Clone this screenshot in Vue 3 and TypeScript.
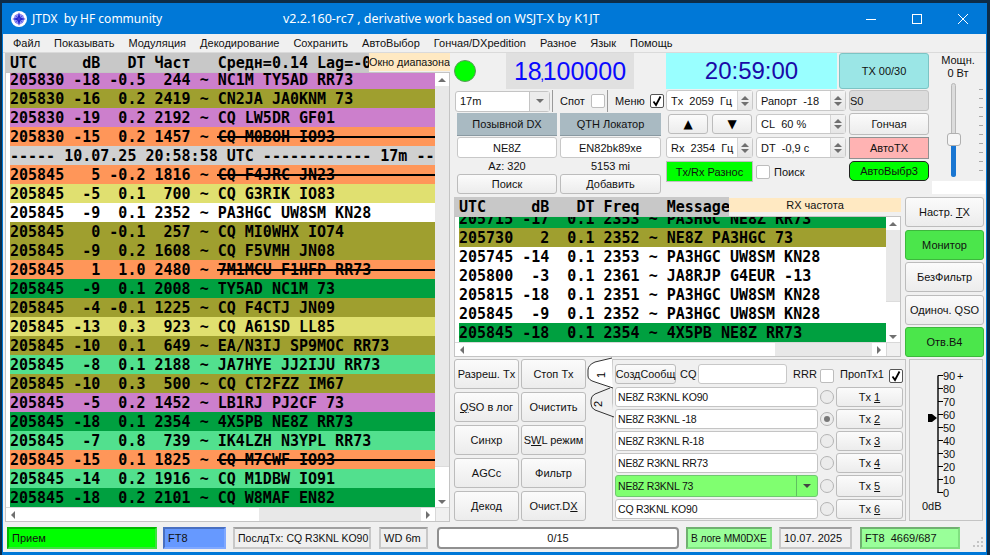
<template>
  <div class="desktop">
    <div class="window">
      <header class="titlebar">
        <svg class="app-icon" width="16" height="16" viewBox="0 0 16 16">
          <circle cx="8" cy="8" r="8" fill="#fff" />
          <circle cx="8" cy="8" r="5.4" fill="#8f8ff5" />
          <path d="M8 1 9.3 6.7 15 8 9.3 9.3 8 15 6.7 9.3 1 8 6.7 6.7Z" fill="#2222cc" />
          <path d="M4 4 8 7 12 4 9 8 12 12 8 9 4 12 7 8Z" fill="#3a3ad8" />
        </svg>
        <span class="app-name">JTDX&nbsp; by HF community</span>
        <span class="app-version">v2.2.160-rc7 , derivative work based on WSJT-X by K1JT</span>
        <div class="win-controls">
          <button class="win-btn">
            <svg width="10" height="10" viewBox="0 0 10 10"><path d="M0 5.5H10" stroke="#fff" /></svg>
          </button>
          <button class="win-btn">
            <svg width="10" height="10" viewBox="0 0 10 10"><rect x=".5" y=".5" width="9" height="9" fill="none" stroke="#fff" /></svg>
          </button>
          <button class="win-btn">
            <svg width="10" height="10" viewBox="0 0 10 10"><path d="M0 0 10 10M10 0 0 10" stroke="#fff" /></svg>
          </button>
        </div>
      </header>

      <nav class="menubar">
        <span v-for="item in menu" :key="item">{{ item }}</span>
      </nav>

      <main class="content">
        <!-- band activity -->
        <section class="band">
          <div class="list-head">
            <span class="head-mono band-mono">{{ bandHead }}</span>
            <span class="head-note band-note">Окно диапазона</span>
          </div>
          <div class="list-frame band-frame">
            <div class="list-body band-body">
              <div class="rows band-rows">
                <div v-for="(r, i) in bandRows" :key="i" class="row" :class="r.c">{{ r.t }}</div>
              </div>
              <div class="vscroll">
                <div class="sb-btn"><i class="arr up"></i></div>
                <div class="sb-fill"></div>
                <div class="sb-thumb band-thumb"><i class="arr down"></i></div>
              </div>
            </div>
            <div class="hscroll">
              <div class="sb-btn side"><i class="arr left"></i></div>
              <div class="h-thumb band-hthumb"></div>
              <div class="sb-fill"></div>
              <div class="sb-btn side"><i class="arr right"></i></div>
              <div class="corner"></div>
            </div>
          </div>
        </section>

        <section class="right">
          <!-- upper controls -->
          <div class="top">
            <div class="top-main">
              <div class="display-row">
                <div class="led"></div>
                <div class="freq">18<small>,</small>100000</div>
                <div class="clock">20:59:00</div>
                <div class="tx-count">TX 00/30</div>
              </div>
              <div class="control-cols">
                <div class="dx-col">
                  <div class="band-row">
                    <div class="combo">
                      <span class="combo-text">17m</span>
                      <span class="combo-arrow"><i class="arr down"></i></span>
                    </div>
                    <span class="sep sep-a"></span>
                    <span class="lbl spot">Спот</span>
                    <span class="check check-spot"></span>
                    <span class="sep sep-b"></span>
                    <span class="lbl menu-lbl">Меню</span>
                    <span class="check check-menu">
                      <svg width="12" height="12" viewBox="0 0 12 12"><path d="M2.5 6.5 5 10 9.5 1.5" fill="none" stroke="#000" stroke-width="1.8" /></svg>
                    </span>
                  </div>
                  <div class="dx-grid">
                    <div class="dx-label">Позывной DX</div>
                    <div class="dx-label">QTH Локатор</div>
                    <div class="field">NE8Z</div>
                    <div class="field">EN82bk89xe</div>
                    <div class="dx-info">Az: 320</div>
                    <div class="dx-info">5153 mi</div>
                    <button class="btn">Поиск</button>
                    <button class="btn">Добавить</button>
                  </div>
                </div>

                <div class="spin-grid">
                  <div class="spin"><span>Tx&nbsp; 2059&nbsp; Гц</span><span class="spin-arrows"><i class="arr up"></i><i class="arr down"></i></span></div>
                  <div class="spin"><span>Рапорт&nbsp; -18</span><span class="spin-arrows"><i class="arr up"></i><i class="arr down"></i></span></div>
                  <div class="updown">
                    <button class="btn glyph">▲</button>
                    <button class="btn glyph">▼</button>
                  </div>
                  <div class="spin"><span>CL&nbsp; 60 %</span><span class="spin-arrows"><i class="arr up"></i><i class="arr down"></i></span></div>
                  <div class="spin"><span>Rx&nbsp; 2354&nbsp; Гц</span><span class="spin-arrows"><i class="arr up"></i><i class="arr down"></i></span></div>
                  <div class="spin"><span>DT&nbsp; -0,9 с</span><span class="spin-arrows"><i class="arr up"></i><i class="arr down"></i></span></div>
                  <div class="split">Tx/Rx Разнос</div>
                  <div class="search-check"><span class="check"></span><span class="lbl">Поиск</span></div>
                </div>

                <div class="auto-col">
                  <div class="s-meter">S0</div>
                  <button class="btn">Гончая</button>
                  <div class="auto-tx">АвтоTX</div>
                  <div class="auto-sel">АвтоВыбр3</div>
                </div>
              </div>
            </div>

            <div class="power">
              <div class="power-label">Мощн.<br />0 Вт</div>
              <div class="slider">
                <div class="slider-track"></div>
                <div class="slider-fill"></div>
                <div class="slider-handle"></div>
                <div class="slider-ticks"><i v-for="n in 10" :key="n"></i></div>
              </div>
              <div class="power-blank"></div>
            </div>
          </div>

          <!-- rx frequency window -->
          <div class="rx">
            <div class="rx-list">
              <div class="list-head rx-head">
                <span class="head-mono rx-mono">{{ rxHead }}</span>
                <span class="head-note rx-note">RX частота</span>
              </div>
              <div class="list-frame rx-frame">
                <div class="list-body rx-body">
                  <div class="rows rx-rows">
                    <div v-for="(r, i) in rxRows" :key="i" class="row" :class="r.c">{{ r.t }}</div>
                  </div>
                  <div class="vscroll">
                    <div class="sb-btn"><i class="arr up"></i></div>
                    <div class="sb-fill"></div>
                    <div class="sb-thumb rx-thumb"><i class="arr down"></i></div>
                  </div>
                </div>
                <div class="hscroll">
                  <div class="sb-btn side"><i class="arr left"></i></div>
                  <div class="h-thumb rx-hthumb"></div>
                  <div class="sb-fill"></div>
                  <div class="sb-btn side"><i class="arr right"></i></div>
                  <div class="corner"></div>
                </div>
              </div>
            </div>
            <div class="rx-side">
              <button class="btn"><span>Настр. <u>T</u>X</span></button>
              <button class="btn on">Монитор</button>
              <button class="btn">БезФильтр</button>
              <button class="btn">Одиноч. QSO</button>
              <button class="btn on">Отв.B4</button>
            </div>
          </div>

          <!-- lower controls -->
          <div class="bottom">
            <div class="actions">
              <button class="btn">Разреш. Tx</button>
              <button class="btn">Стоп Tx</button>
              <button class="btn"><span><u>Q</u>SO в лог</span></button>
              <button class="btn">Очистить</button>
              <button class="btn">Синхр</button>
              <button class="btn"><span>S<u>W</u>L режим</span></button>
              <button class="btn">AGCc</button>
              <button class="btn">Фильтр</button>
              <button class="btn">Декод</button>
              <button class="btn"><span>Очист.D<u>X</u></span></button>
            </div>

            <div class="tabs">
              <svg class="tab-strip" width="30" height="62" viewBox="0 0 30 62">
                <path d="M23 30 8 36Q4 38 4 42V46Q4 50 8 52L27 59" fill="#f0f0f0" stroke="#333" />
                <path d="M25 0 8 4Q1 7 1 12V18Q1 22 8 24L26 30" fill="#fff" stroke="#333" />
                <text transform="translate(18 17) rotate(-90)" class="tab-num" text-anchor="middle">1</text>
                <text transform="translate(15 46) rotate(-90)" class="tab-num" text-anchor="middle">2</text>
              </svg>
              <div class="tab-panel">
                <div class="msg-top">
                  <button class="btn gen">СоздСообщ</button>
                  <span class="lbl cq">CQ</span>
                  <span class="field cq-input"></span>
                  <span class="lbl rrr">RRR</span>
                  <span class="check check-rrr"></span>
                  <span class="lbl prop">ПропТх1</span>
                  <span class="check check-prop">
                    <svg width="12" height="12" viewBox="0 0 12 12"><path d="M2.5 6.5 5 10 9.5 1.5" fill="none" stroke="#000" stroke-width="1.8" /></svg>
                  </span>
                </div>
                <template v-for="(m, i) in messages" :key="i">
                  <div class="msg" :class="{ 'msg-on': m.active }">
                    <span class="msg-text">{{ m.text }}</span>
                    <span v-if="m.active" class="msg-arrow"><i class="arr down dark"></i></span>
                  </div>
                  <span class="radio" :class="{ sel: m.sel }"></span>
                  <button class="btn">
                    <span>Tx <u>{{ i + 1 }}</u></span>
                  </button>
                </template>
              </div>
            </div>

            <div class="meter">
              <svg width="72" height="160" viewBox="0 0 72 160">
                <path d="M28 15.5V133" stroke="#000" stroke-width="1.4" fill="none" />
                <template v-for="(v, i) in scale" :key="v">
                  <path :d="`M28 ${15.5 + i * 13}H33`" stroke="#000" />
                  <text x="33" :y="19.5 + i * 13" class="scale-text">{{ v }}</text>
                </template>
                <text x="47" y="20" class="scale-text">+</text>
                <path d="M18 54H22L27 58 22 62H18Z" fill="#000" />
                <text x="12" y="150" class="scale-text">0dB</text>
              </svg>
            </div>
          </div>
        </section>
      </main>

      <footer class="status">
        <div class="st st-rx">Прием</div>
        <div class="st st-mode">FT8</div>
        <div class="st st-last">ПослдTx: CQ R3KNL KO90</div>
        <div class="st st-wd">WD 6m</div>
        <div class="st-progress">0/15</div>
        <div class="st st-log">В логе MM0DXE</div>
        <div class="st st-date">10.07. 2025</div>
        <div class="st st-count">FT8&nbsp; 4669/687</div>
        <svg class="grip" width="12" height="12" viewBox="0 0 12 12" fill="#c4c4c4">
          <rect x="9" y="1" width="2" height="2" /><rect x="5" y="5" width="2" height="2" /><rect x="9" y="5" width="2" height="2" />
          <rect x="1" y="9" width="2" height="2" /><rect x="5" y="9" width="2" height="2" /><rect x="9" y="9" width="2" height="2" />
        </svg>
      </footer>
    </div>
  </div>
</template>

<script setup lang="ts">
interface Row {
  t: string
  c: string
}

interface TxMessage {
  text: string
  sel?: boolean
  active?: boolean
}

const menu = ['Файл', 'Показывать', 'Модуляция', 'Декодирование', 'Сохранить', 'АвтоВыбор', 'Гончая/DXpedition', 'Разное', 'Язык', 'Помощь']

const bandHead = 'UTC     dB   DT Част   Средн=0.14 Lag=-0'
const rxHead = 'UTC     dB   DT Freq   Message'

const bandRows: Row[] = [
  { t: '205830 -18 -0.5  244 ~ NC1M TY5AD RR73', c: 'violet' },
  { t: '205830 -16  0.2 2419 ~ CN2JA JA0KNM 73', c: 'olive' },
  { t: '205830 -19  0.2 2192 ~ CQ LW5DR GF01', c: 'violet' },
  { t: '205830 -15  0.2 1457 ~ CQ M0BOH IO93', c: 'orange strike' },
  { t: '----- 10.07.25 20:58:58 UTC ------------ 17m -- ', c: 'sep-row' },
  { t: '205845   5 -0.2 1816 ~ CQ F4JRC JN23', c: 'orange strike' },
  { t: '205845  -5  0.1  700 ~ CQ G3RIK IO83', c: 'yellow' },
  { t: '205845  -9  0.1 2352 ~ PA3HGC UW8SM KN28', c: 'white' },
  { t: '205845   0 -0.1  257 ~ CQ MI0WHX IO74', c: 'olive' },
  { t: '205845  -9  0.2 1608 ~ CQ F5VMH JN08', c: 'olive' },
  { t: '205845   1  1.0 2480 ~ 7M1MCU F1HFP RR73', c: 'orange strike' },
  { t: '205845  -9  0.1 2008 ~ TY5AD NC1M 73', c: 'green' },
  { t: '205845  -4 -0.1 1225 ~ CQ F4CTJ JN09', c: 'olive' },
  { t: '205845 -13  0.3  923 ~ CQ A61SD LL85', c: 'yellow' },
  { t: '205845 -10  0.1  649 ~ EA/N3IJ SP9MOC RR73', c: 'olive' },
  { t: '205845  -8  0.1 2188 ~ JA7HYE JJ2IJU RR73', c: 'mint' },
  { t: '205845 -10  0.3  500 ~ CQ CT2FZZ IM67', c: 'olive' },
  { t: '205845  -5  0.2 1452 ~ LB1RJ PJ2CF 73', c: 'violet' },
  { t: '205845 -18  0.1 2354 ~ 4X5PB NE8Z RR73', c: 'green' },
  { t: '205845  -7  0.8  739 ~ IK4LZH N3YPL RR73', c: 'mint' },
  { t: '205845 -15  0.1 1825 ~ CQ M7CWF IO93', c: 'orange strike' },
  { t: '205845 -14  0.2 1916 ~ CQ M1DBW IO91', c: 'mint' },
  { t: '205845 -18  0.2 2101 ~ CQ W8MAF EN82', c: 'green' }
]

const rxRows: Row[] = [
  { t: '205715 -17  0.1 2353 ~ PA3HGC NE8Z RR73', c: 'green' },
  { t: '205730   2  0.1 2352 ~ NE8Z PA3HGC 73', c: 'olive' },
  { t: '205745 -14  0.1 2353 ~ PA3HGC UW8SM KN28', c: 'white' },
  { t: '205800  -3  0.1 2361 ~ JA8RJP G4EUR -13', c: 'white' },
  { t: '205815 -18  0.1 2351 ~ PA3HGC UW8SM KN28', c: 'white' },
  { t: '205845  -9  0.1 2352 ~ PA3HGC UW8SM KN28', c: 'white' },
  { t: '205845 -18  0.1 2354 ~ 4X5PB NE8Z RR73', c: 'green' }
]

const messages: TxMessage[] = [
  { text: 'NE8Z R3KNL KO90' },
  { text: 'NE8Z R3KNL -18', sel: true },
  { text: 'NE8Z R3KNL R-18' },
  { text: 'NE8Z R3KNL RR73' },
  { text: 'NE8Z R3KNL 73', active: true },
  { text: 'CQ R3KNL KO90' }
]

const scale = [90, 80, 70, 60, 50, 40, 30, 20, 10, 0]
</script>

<style scoped>
.desktop {
  width: 990px;
  height: 555px;
  background: #0d2c48;
  padding: 3px 0 0 2px;
  box-sizing: border-box;
  overflow: hidden;
}

.window {
  width: 985px;
  height: 552px;
  box-sizing: border-box;
  border: 1px solid #0078d7;
  border-top: 0;
  border-bottom-width: 3px;
  background: #f0f0f0;
  display: flex;
  flex-direction: column;
  font-family: "Liberation Sans", Arial, sans-serif;
  font-size: 11px;
  color: #111;
}

button {
  font: inherit;
  color: inherit;
  margin: 0;
  padding: 0;
}

/* title + menu */
.titlebar {
  height: 31px;
  flex: none;
  background: #0078d7;
  color: #fff;
  display: flex;
  align-items: center;
  font-family: "Noto Sans", sans-serif;
}

.app-icon {
  margin-left: 8px;
  flex: none;
}

.app-name {
  margin-left: 5px;
  width: 251px;
  flex: none;
  font-size: 12px;
  white-space: nowrap;
}

.app-version {
  white-space: nowrap;
  font-size: 12.5px;
}

.win-controls {
  margin-left: auto;
  display: flex;
}

.win-btn {
  width: 46px;
  height: 31px;
  border: 0;
  background: none;
  display: flex;
  align-items: center;
  justify-content: center;
}

.menubar {
  height: 18px;
  flex: none;
  display: flex;
  align-items: center;
  gap: 14px;
  padding-left: 10px;
  border-bottom: 1px solid #dadada;
  white-space: nowrap;
}

.content {
  flex: none;
  height: 474px;
  display: flex;
  gap: 4px;
  padding-left: 2px;
}

/* decode lists */
.band {
  width: 445px;
  flex: none;
  display: flex;
  flex-direction: column;
}

.right {
  width: 530px;
  flex: none;
  display: flex;
  flex-direction: column;
}

.list-head {
  display: flex;
  align-items: flex-start;
  flex: none;
}

.head-mono {
  height: 19px;
  background: #c8c8c8;
  font: bold 15px/21px "DejaVu Sans Mono", monospace;
  white-space: pre;
  color: #000;
  box-sizing: border-box;
}

.band-mono {
  width: 364px;
  padding-left: 5px;
  overflow: hidden;
}

.head-note {
  background: #ffe9c2;
  text-align: center;
  white-space: nowrap;
  overflow: hidden;
}

.band-note {
  width: 81px;
  height: 18px;
  line-height: 18px;
  font-size: 10.8px;
}

.list-frame {
  display: flex;
  flex-direction: column;
  background: #fff;
  border: 1px solid #c4c4c4;
  box-sizing: border-box;
}

.band-frame {
  flex: 1;
  margin-bottom: 6px;
}

.list-body {
  display: flex;
  flex: 1;
  min-height: 0;
}

.rows {
  flex: 1;
  overflow: hidden;
  background: #fff;
  min-width: 0;
}

.band-rows {
  padding-left: 4px;
}

.band-rows .row:first-child {
  margin-top: -3px;
}

.rx-rows {
  padding-left: 4px;
}

.rx-rows .row:first-child {
  margin-top: -8px;
}

.row {
  position: relative;
  height: 19px;
  font: bold 15px/21px "DejaVu Sans Mono", monospace;
  white-space: pre;
  color: #000;
  overflow: hidden;
}

.violet { background: #cc7fcc; }
.olive { background: #9f9f2f; }
.orange { background: #ff9659; }
.yellow { background: #e0e070; }
.white { background: #fff; }
.green { background: #00a040; }
.mint { background: #52e08e; }
.sep-row { background: #d0d0d0; }

.strike::after {
  content: "";
  position: absolute;
  left: 207px;
  right: 0;
  top: 9px;
  height: 2px;
  background: #000;
}

.vscroll {
  width: 14px;
  flex: none;
  display: flex;
  flex-direction: column;
  background: #e8e8e8;
}

.sb-btn {
  height: 13px;
  flex: none;
  background: #fff;
  display: flex;
  align-items: center;
  justify-content: center;
}

.sb-btn.side {
  width: 14px;
  height: auto;
}

.sb-fill {
  flex: 1;
  background: #e8e8e8;
}

.sb-thumb {
  flex: none;
  background: #fff;
  border-top: 1px solid #dcdcdc;
  display: flex;
  align-items: flex-end;
  justify-content: center;
  padding-bottom: 3px;
  box-sizing: border-box;
}

.band-thumb { height: 41px; }
.rx-thumb { height: 41px; }

.hscroll {
  height: 13px;
  flex: none;
  display: flex;
  border-top: 1px solid #d8d8d8;
  background: #e8e8e8;
}

.h-thumb {
  background: #fff;
  flex: none;
}

.band-hthumb { width: 239px; }
.rx-hthumb { width: 306px; }

.corner {
  width: 14px;
  flex: none;
  background: #f0f0f0;
  border-left: 1px solid #d8d8d8;
  box-sizing: border-box;
}

.arr {
  display: block;
  width: 0;
  height: 0;
  border: 4px solid transparent;
}

.arr.up {
  border-top: 0;
  border-bottom: 4px solid #707070;
}

.arr.down {
  border-bottom: 0;
  border-top: 4px solid #707070;
}

.arr.left {
  border-left: 0;
  border-right: 4px solid #707070;
}

.arr.right {
  border-right: 0;
  border-left: 4px solid #707070;
}

.arr.dark {
  border-top-color: #444;
}

/* shared controls */
.btn {
  border: 1px solid #bcbcbc;
  border-radius: 3px;
  background: linear-gradient(#fbfbfb, #ececec);
  display: flex;
  align-items: center;
  justify-content: center;
  white-space: nowrap;
  box-sizing: border-box;
  min-width: 0;
}

.btn.on {
  background: #4be64b;
  border-color: #3cb83c;
}

.check {
  display: inline-flex;
  align-items: center;
  justify-content: center;
  width: 14px;
  height: 14px;
  box-sizing: border-box;
  background: #fff;
  border: 1px solid #bdbdbd;
  border-radius: 2px;
  flex: none;
}

.check-menu,
.check-prop {
  border-color: #555;
}

.lbl {
  white-space: nowrap;
  flex: none;
}

.field {
  background: #fff;
  border: 1px solid #c8c8c8;
  border-radius: 3px;
  display: flex;
  align-items: center;
  justify-content: center;
  box-sizing: border-box;
}

/* upper block */
.top {
  display: flex;
  height: 142px;
  flex: none;
}

.top-main {
  width: 476px;
  flex: none;
}

.display-row {
  display: flex;
  height: 36px;
  margin-bottom: 1px;
}

.led {
  width: 22px;
  height: 22px;
  border-radius: 50%;
  background: #00ff00;
  border: 1px solid #5a9a5a;
  box-sizing: border-box;
  margin-top: 7px;
  flex: none;
}

.freq {
  width: 128px;
  margin-left: 30px;
  flex: none;
  background: #e0e0e0;
  color: #0a0aff;
  font-size: 25px;
  line-height: 36px;
  text-align: center;
}

.freq small {
  font-size: 14px;
  margin: 0 -1.5px;
}

.clock {
  width: 171px;
  margin-left: 32px;
  flex: none;
  background: #99ffff;
  color: #1a0aa8;
  font-size: 24px;
  line-height: 36px;
  text-align: center;
}

.tx-count {
  width: 90px;
  margin-left: 2px;
  flex: none;
  background: #9be6e6;
  border: 1px solid #7cc4c4;
  border-radius: 3px;
  box-sizing: border-box;
  display: flex;
  align-items: center;
  justify-content: center;
}

.control-cols {
  display: flex;
}

.dx-col {
  width: 207px;
  flex: none;
}

.band-row {
  display: flex;
  align-items: center;
  height: 22px;
  padding-left: 1px;
}

.combo {
  width: 95px;
  height: 21px;
  flex: none;
  background: #fff;
  border: 1px solid #c4c4c4;
  border-radius: 3px;
  box-sizing: border-box;
  display: flex;
  align-items: center;
}

.combo-text {
  flex: 1;
  padding-left: 4px;
}

.combo-arrow {
  width: 20px;
  height: 100%;
  background: #ececec;
  border-left: 1px solid #c4c4c4;
  display: flex;
  align-items: center;
  justify-content: center;
  box-sizing: border-box;
}

.sep {
  width: 1px;
  height: 22px;
  background: #9a9a9a;
  flex: none;
}

.sep-a { margin-left: 2px; }
.spot { margin-left: 7px; width: 31px; }
.check-spot { margin-left: 0; }
.sep-b { margin-left: 2px; }
.menu-lbl { margin-left: 7px; width: 35px; }

.dx-grid {
  display: grid;
  grid-template-columns: 100px 101px;
  grid-template-rows: 23px 21px 14px 20px;
  column-gap: 3px;
  row-gap: 1px;
  padding: 1px 0 0 3px;
}

.dx-label {
  background: #a9bac2;
  display: flex;
  align-items: center;
  justify-content: center;
  border-bottom: 1px solid #8a9aa2;
}

.dx-info {
  text-align: center;
  line-height: 14px;
}

.spin-grid {
  width: 180px;
  margin-left: 5px;
  flex: none;
  display: grid;
  grid-template-columns: 87px 90px;
  grid-template-rows: 21px 20px 21px 21px;
  column-gap: 3px;
  row-gap: 3px;
}

.spin {
  background: #fff;
  border: 1px solid #c8c8c8;
  border-radius: 3px;
  box-sizing: border-box;
  display: flex;
  align-items: center;
  justify-content: space-between;
  padding-left: 4px;
  white-space: nowrap;
}

.spin-arrows {
  width: 14px;
  height: 100%;
  flex: none;
  background: linear-gradient(#f4f4f4, #e6e6e6);
  border-left: 1px solid #d4d4d4;
  display: flex;
  flex-direction: column;
  align-items: center;
  justify-content: center;
  gap: 2px;
}

.updown {
  display: grid;
  grid-template-columns: 40px 40px;
  column-gap: 4px;
  padding-left: 2px;
}

.glyph {
  font-size: 12px;
  color: #000;
  font-family: "DejaVu Sans", sans-serif;
}

.split {
  background: #00ff00;
  border: 1px solid #c0c0c0;
  box-sizing: border-box;
  display: flex;
  align-items: center;
  justify-content: center;
}

.search-check {
  display: flex;
  align-items: center;
  gap: 4px;
}

.auto-col {
  width: 80px;
  margin-left: 3px;
  flex: none;
  display: grid;
  grid-template-rows: 21px 22px 22px 20px;
  row-gap: 2px;
}

.s-meter {
  background: #dcdcdc;
  border: 1px solid #c4c4c4;
  border-radius: 3px;
  box-sizing: border-box;
  display: flex;
  align-items: center;
}

.auto-tx {
  background: #ffb3b3;
  border: 1px solid #909090;
  box-sizing: border-box;
  display: flex;
  align-items: center;
  justify-content: center;
}

.auto-sel {
  background: #00ff00;
  border: 1px solid #222;
  border-radius: 5px;
  box-sizing: border-box;
  display: flex;
  align-items: center;
  justify-content: center;
}

.power {
  width: 54px;
  margin-left: 1px;
  flex: none;
  display: flex;
  flex-direction: column;
  align-items: center;
}

.power-label {
  height: 29px;
  margin-top: 1px;
  line-height: 13px;
  text-align: center;
  white-space: nowrap;
}

.slider {
  position: relative;
  width: 54px;
  height: 98px;
  flex: none;
}

.slider-track {
  position: absolute;
  left: 20px;
  top: 0;
  bottom: 4px;
  width: 5px;
  background: #dcdcdc;
  border: 1px solid #b8b8b8;
  border-radius: 3px;
  box-sizing: border-box;
}

.slider-fill {
  position: absolute;
  left: 20px;
  top: 56px;
  bottom: 4px;
  width: 5px;
  background: #1976d2;
  border-radius: 0 0 3px 3px;
}

.slider-handle {
  position: absolute;
  left: 16px;
  top: 50px;
  width: 14px;
  height: 13px;
  background: #f6f6f6;
  border: 1px solid #b0b0b0;
  border-radius: 3px;
  box-sizing: border-box;
}

.slider-ticks {
  position: absolute;
  right: 2px;
  top: 6px;
  width: 4px;
  display: flex;
  flex-direction: column;
  gap: 8px;
}

.slider-ticks i {
  display: block;
  height: 1px;
  background: #a8a8a8;
}

.power-blank {
  width: 53px;
  height: 13px;
  background: #fff;
}

/* rx block */
.rx {
  display: flex;
  height: 160px;
  margin-top: 2px;
  flex: none;
}

.rx-list {
  width: 447px;
  flex: none;
  display: flex;
  flex-direction: column;
}

.rx-mono {
  width: 275px;
  padding-left: 5px;
  overflow: hidden;
}

.rx-note {
  width: 172px;
  height: 14px;
  line-height: 14px;
  margin-top: 1px;
  font-size: 11px;
}

.rx-frame {
  flex: 1;
  min-height: 0;
}

.rx-side {
  width: 79px;
  margin-left: 4px;
  flex: none;
  display: grid;
  grid-template-rows: repeat(5, 30px);
  row-gap: 2.5px;
}

/* lower block */
.bottom {
  display: flex;
  margin-top: 2px;
  height: 162px;
  flex: none;
}

.actions {
  width: 132px;
  flex: none;
  display: grid;
  grid-template-columns: 65px 65px;
  grid-template-rows: repeat(5, 30px);
  column-gap: 2px;
  row-gap: 3px;
}

.tabs {
  margin-left: 2px;
  width: 318px;
  flex: none;
  position: relative;
  display: flex;
}

.tab-strip {
  position: absolute;
  left: -1px;
  top: -1px;
  z-index: 1;
  overflow: visible;
}

.tab-num {
  font-family: "Liberation Sans", sans-serif;
  font-size: 11px;
  fill: #000;
}

.tab-panel {
  margin-left: 24px;
  width: 294px;
  height: 162px;
  box-sizing: border-box;
  border: 1px solid #c4c4c4;
  padding: 4px 0 0 2px;
  display: grid;
  grid-template-columns: 203px 14px 67px;
  grid-template-rows: 21px 20px 20px 20px 20px 22px 20px;
  column-gap: 2px;
  row-gap: 2px;
  align-items: stretch;
}

.msg-top {
  grid-column: 1 / -1;
  display: flex;
  align-items: flex-start;
}

.gen {
  width: 61px;
  height: 20px;
  flex: none;
  font-size: 10.8px;
}

.cq {
  margin-left: 4px;
  width: 18px;
  line-height: 20px;
}

.cq-input {
  width: 89px;
  height: 20px;
  flex: none;
}

.rrr {
  margin-left: 6px;
  width: 27px;
  line-height: 20px;
}

.check-rrr {
  margin-top: 5px;
}

.prop {
  margin-left: 6px;
  width: 49px;
  line-height: 20px;
}

.check-prop {
  margin-top: 5px;
}

.msg {
  background: #fff;
  border: 1px solid #c4c4c4;
  border-radius: 3px;
  box-sizing: border-box;
  display: flex;
  align-items: center;
  padding-left: 2px;
  overflow: hidden;
}

.msg-text {
  flex: 1;
  white-space: nowrap;
  font-size: 10.5px;
  letter-spacing: -0.2px;
}

.msg-on {
  background: #80ff70;
  border-color: #70c870;
}

.msg-arrow {
  width: 20px;
  height: 100%;
  border-left: 1px solid #60c060;
  display: flex;
  align-items: center;
  justify-content: center;
}

.radio {
  width: 14px;
  height: 14px;
  border: 1px solid #b4b4b4;
  background: #ececec;
  border-radius: 50%;
  box-sizing: border-box;
  align-self: center;
  display: flex;
  align-items: center;
  justify-content: center;
}

.radio.sel::after {
  content: "";
  width: 6px;
  height: 6px;
  border-radius: 50%;
  background: #777;
}

.meter {
  width: 74px;
  margin-left: 3px;
  flex: none;
  box-sizing: border-box;
  border: 1px solid #c4c4c4;
}

.meter svg {
  display: block;
}

.scale-text {
  font-family: "Liberation Sans", sans-serif;
  font-size: 11px;
  fill: #111;
}

/* status bar */
.status {
  flex: none;
  height: 22px;
  display: flex;
  align-items: stretch;
  padding-left: 4px;
}

.st {
  box-sizing: border-box;
  border: 2px solid #c8c8c8;
  border-top-color: #a0a0a0;
  display: flex;
  align-items: center;
  padding-left: 3px;
  white-space: nowrap;
  overflow: hidden;
}

.st-rx {
  width: 150px;
  background: #00ff00;
  border-color: #00b800 #40e040 #40e040 #00b800;
}

.st-mode {
  width: 63px;
  margin-left: 6px;
  background: #6699ff;
  border-color: #4a70c0 #80a8ff #80a8ff #4a70c0;
}

.st-last {
  width: 138px;
  margin-left: 7px;
  font-size: 10.5px;
}

.st-wd {
  width: 49px;
  margin-left: 8px;
}

.st-progress {
  width: 242px;
  margin-left: 9px;
  background: #fff;
  border: 2px solid #909090;
  border-radius: 4px;
  box-sizing: border-box;
  display: flex;
  align-items: center;
  justify-content: center;
}

.st-log {
  width: 86px;
  margin-left: 7px;
  background: #99ff99;
  border-color: #70b070 #80e080 #80e080 #70b070;
  font-size: 10.2px;
  letter-spacing: -0.1px;
}

.st-date {
  width: 73px;
  margin-left: 7px;
}

.st-count {
  width: 100px;
  margin-left: 8px;
  background: #99ff99;
  border-color: #70b070 #80e080 #80e080 #70b070;
}

.grip {
  margin-left: 12px;
  margin-top: 9px;
}
</style>
